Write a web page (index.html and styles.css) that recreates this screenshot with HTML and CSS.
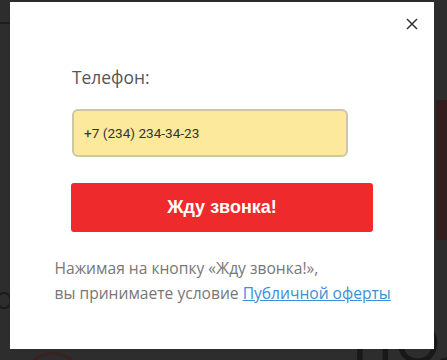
FILE: index.html
```html
<!DOCTYPE html>
<html lang="ru">
<head>
<meta charset="utf-8">
<title>Обратный звонок</title>
<link rel="stylesheet" href="styles.css">
</head>
<body>
<div class="page">
  <div class="bg-line"></div>
  <div class="bg-red"></div>
  <div class="bg-ring"></div>
  <div class="bg-title">ПОЛУ</div>
  <div class="bg-left">Ю</div>
</div>
<div class="overlay">
  <div class="modal">
    <button class="close" aria-label="Закрыть">
      <svg width="12" height="12" viewBox="0 0 12 12"><path d="M1 1L11 11M11 1L1 11" stroke="#333" stroke-width="1.5" fill="none"/></svg>
    </button>
    <form class="form">
      <label class="label" for="phone">Телефон:</label>
      <input class="input" id="phone" type="text" value="+7 (234) 234-34-23">
      <button class="submit" type="button">Жду звонка!</button>
    </form>
    <p class="note">Нажимая на кнопку «Жду звонка!»,<br>вы принимаете условие <a href="#" class="link">Публичной оферты</a></p>
  </div>
</div>
</body>
</html>
```
FILE: styles.css
```css
html, body {
  margin: 0;
  padding: 0;
  width: 447px;
  height: 360px;
  overflow: hidden;
  background: #2d2d2d;
}
.page {
  position: relative;
  width: 447px;
  height: 360px;
  overflow: hidden;
}
.bg-line {
  position: absolute;
  left: 0;
  top: 22px;
  width: 12px;
  height: 2px;
  background: #1e1e1e;
}
.bg-red {
  position: absolute;
  left: 436px;
  top: 100px;
  width: 11px;
  height: 140px;
  background: #341d1d;
}
.bg-ring {
  position: absolute;
  left: 22px;
  top: 352px;
  width: 56px;
  height: 56px;
  border: 3px solid #3a2222;
  border-radius: 50%;
}
.bg-title {
  position: absolute;
  left: 352px;
  top: 312px;
  font-family: "Lato", sans-serif;
  font-weight: 400;
  font-size: 56px;
  line-height: 60px;
  letter-spacing: 2px;
  color: #181818;
}
.bg-left {
  position: absolute;
  left: -12px;
  top: 285px;
  font-family: "Lato", sans-serif;
  font-size: 24px;
  color: #1b1b1b;
}
.overlay {
  position: absolute;
  left: 0;
  top: 0;
  width: 447px;
  height: 360px;
}
.modal {
  position: absolute;
  left: 10px;
  top: 2px;
  width: 424px;
  height: 347px;
  background: #fff;
  box-sizing: border-box;
  padding-top: 64px;
}
.close {
  position: absolute;
  right: 15px;
  top: 15px;
  width: 14px;
  height: 14px;
  padding: 0;
  border: 0;
  background: none;
  display: flex;
  align-items: center;
  justify-content: center;
}
.form {
  width: 302px;
  margin: 0 auto;
  display: flex;
  flex-direction: column;
  align-items: flex-start;
}
.label {
  margin-left: 1px;
  font-family: "Open Sans", sans-serif;
  font-size: 17.4px;
  line-height: 22px;
  color: #555;
}
.input {
  margin-top: 21px;
  margin-left: 1px;
  width: 276px;
  height: 48px;
  box-sizing: border-box;
  border: 2px solid #cdc6a9;
  border-radius: 6px;
  background: #fde99b;
  padding: 0 10px;
  font-family: "Roboto", sans-serif;
  font-size: 13.6px;
  color: #333;
  outline: none;
}
.submit {
  margin-top: 26px;
  width: 302px;
  height: 49px;
  border: 0;
  border-radius: 3px;
  background: #ee2a2c;
  color: #fff;
  font-family: "Liberation Sans", sans-serif;
  font-weight: bold;
  font-size: 18px;
}
.note {
  width: 340px;
  margin: 24px auto 0;
  padding-left: 5px;
  font-family: "Open Sans", sans-serif;
  font-size: 15.6px;
  line-height: 25px;
  color: #777;
}
.link {
  color: #3a8fd8;
  text-decoration: underline;
}
```
